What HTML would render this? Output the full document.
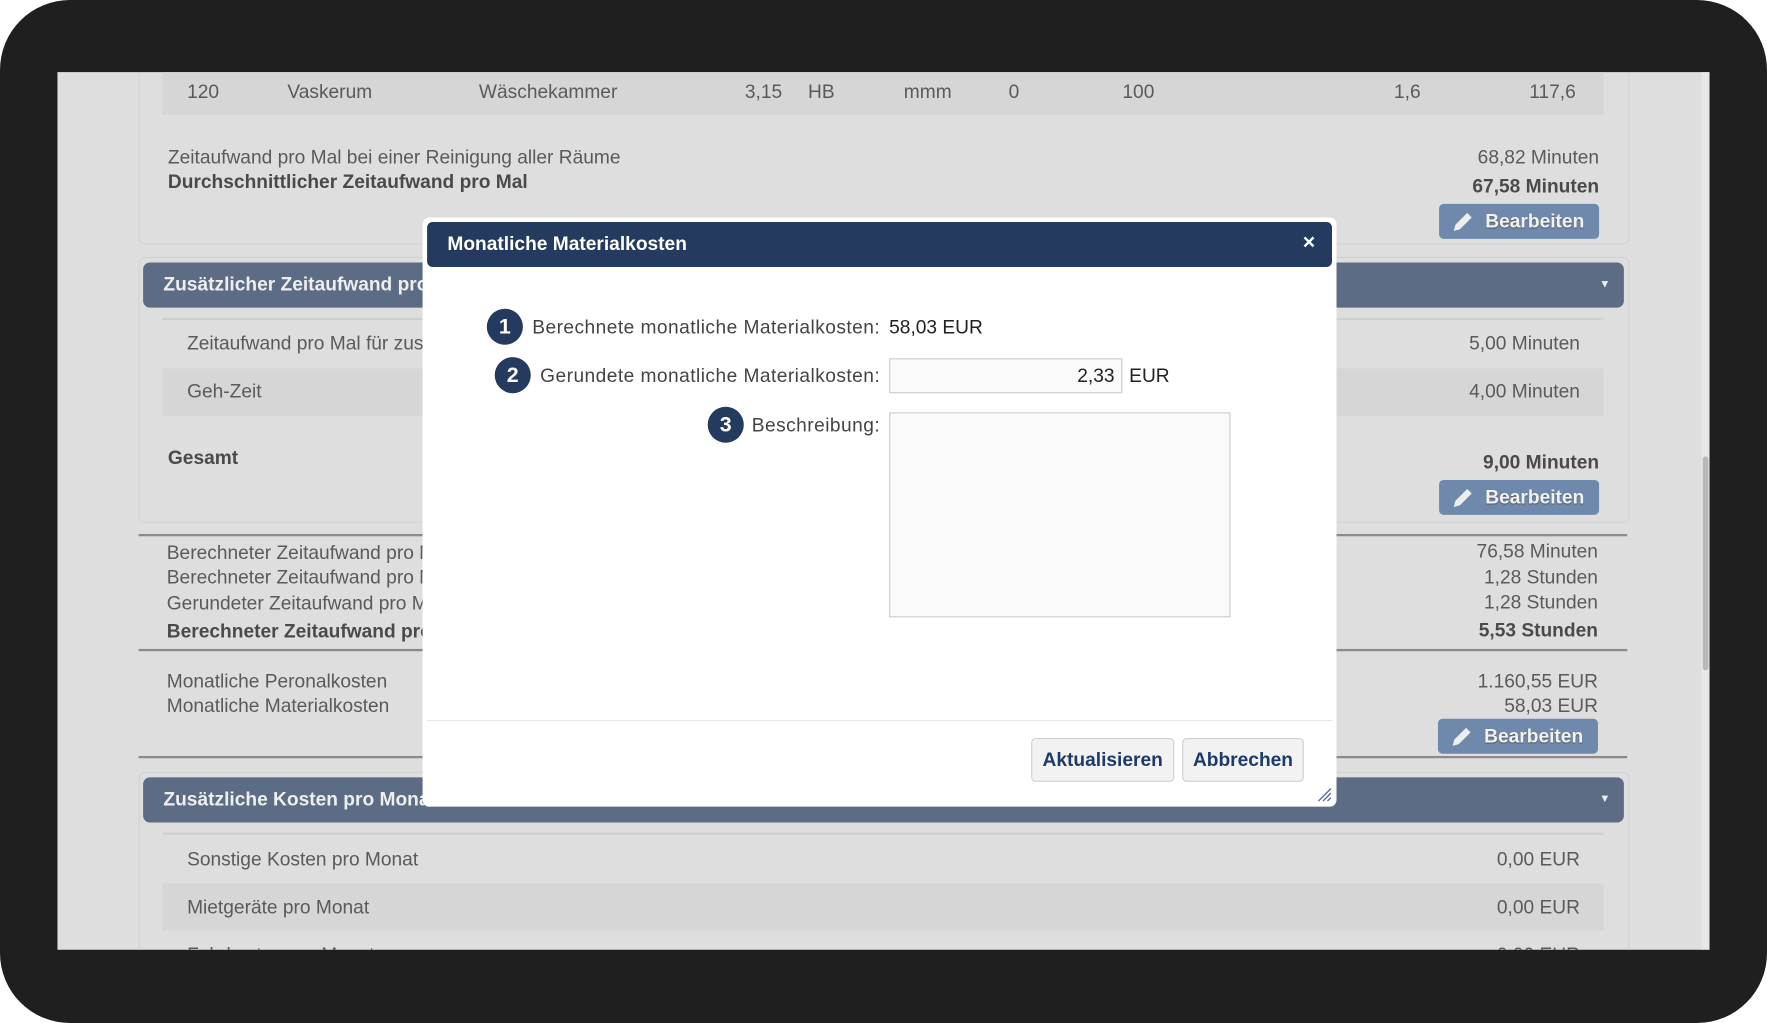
<!DOCTYPE html>
<html><head><meta charset="utf-8"><style>
html,body{margin:0;padding:0;width:1767px;height:1023px;overflow:hidden;background:#fff;font-family:"Liberation Sans",sans-serif}
#w{position:absolute;left:0;top:0;width:1568px;height:908px;transform:scale(1.12691,1.12665);transform-origin:0 0}
.a{position:absolute}
.frame{left:0;top:0;width:1568px;height:908px;background:#201f20;border-radius:62px}
.scr{left:51px;top:64px;width:1466px;height:779px;background:#dedede;overflow:hidden}
.t{position:absolute;font-size:17px;color:#5a5a5a;white-space:nowrap;line-height:20px}
.b{font-weight:bold;color:#4a4a4a}
.r{text-align:right}
.btn{position:absolute;background:#6f89ac;border-radius:4px;color:#f2f2f2;font-weight:bold;font-size:17px;line-height:31px;text-shadow:0 1px 1px #555}
.hdr{position:absolute;background:#5c6c85;border-radius:6px;color:#eee;font-weight:bold;font-size:17px;line-height:40px;padding-left:18px;box-sizing:border-box}
.line{position:absolute;height:2px;background:#8a8a8a}
.c{position:absolute;width:32px;height:32px;border-radius:50%;background:#243a5e;color:#fff;font-weight:bold;font-size:19px;text-align:center;line-height:33px}
.lbl{position:absolute;font-size:17px;color:#444;white-space:nowrap;line-height:20px}
.rl{right:787px;text-align:right;letter-spacing:0.4px}
.mb{position:absolute;background:#f2f2f2;border:1px solid #d0d0d0;border-radius:4px;color:#1c3a6b;font-weight:bold;font-size:17px;text-align:center;box-sizing:border-box;line-height:37px}
</style></head><body><div id="w">
<div class="a frame"></div>
<div class="a scr">
<div class="a" style="left:72px;top:-10px;width:1321px;height:161px;border:1px solid #d2d2d2;border-radius:6px"></div>
<div class="a" style="left:93px;top:0;width:1279px;height:38px;background:#d6d6d6"></div>
<div class="t" style="left:115px;top:8px">120</div>
<div class="t" style="left:204px;top:8px">Vaskerum</div>
<div class="t" style="left:374px;top:8px">Wäschekammer</div>
<div class="t" style="left:610px;top:8px">3,15</div>
<div class="t" style="left:666px;top:8px">HB</div>
<div class="t" style="left:751px;top:8px">mmm</div>
<div class="t" style="left:844px;top:8px">0</div>
<div class="t" style="left:945px;top:8px">100</div>
<div class="t" style="left:1186px;top:8px">1,6</div>
<div class="t" style="left:1306px;top:8px">117,6</div>
<div class="t" style="left:98px;top:66px">Zeitaufwand pro Mal bei einer Reinigung aller Räume</div>
<div class="t b" style="left:98px;top:88px">Durchschnittlicher Zeitaufwand pro Mal</div>
<div class="t r" style="right:98px;top:66px">68,82 Minuten</div>
<div class="t r b" style="right:98px;top:92px">67,58 Minuten</div>
<div class="btn" style="left:1226px;top:117px;width:142px"><span style="padding-left:41px">Bearbeiten</span><svg class="a" style="left:11px;top:6px" width="20" height="20" viewBox="0 0 20 20"><path d="M2 18l1.5-5.5L14 2l4 4L7.5 16.5z" fill="#eee"/></svg></div>

<div class="a" style="left:72px;top:164px;width:1321px;height:234px;border:1px solid #d2d2d2;border-radius:6px"></div>
<div class="hdr" style="left:76px;top:169px;width:1314px;height:40px">Zusätzlicher Zeitaufwand pro Mal<span class="a" style="right:12px;top:0;font-size:10px">▼</span></div>
<div class="a" style="left:93px;top:218px;width:1279px;height:2px;background:#d0d0d0"></div>
<div class="t" style="left:115px;top:231px">Zeitaufwand pro Mal für zusätzliche Arbeiten</div>
<div class="t r" style="right:115px;top:231px">5,00 Minuten</div>
<div class="a" style="left:93px;top:263px;width:1279px;height:42px;background:#d6d6d6"></div>
<div class="t" style="left:115px;top:274px">Geh-Zeit</div>
<div class="t r" style="right:115px;top:274px">4,00 Minuten</div>
<div class="t b" style="left:98px;top:333px">Gesamt</div>
<div class="t r b" style="right:98px;top:337px">9,00 Minuten</div>
<div class="btn" style="left:1226px;top:362px;width:142px"><span style="padding-left:41px">Bearbeiten</span><svg class="a" style="left:11px;top:6px" width="20" height="20" viewBox="0 0 20 20"><path d="M2 18l1.5-5.5L14 2l4 4L7.5 16.5z" fill="#eee"/></svg></div>

<div class="line" style="left:72px;top:410px;width:1321px"></div>
<div class="t" style="left:97px;top:417px">Berechneter Zeitaufwand pro Mal</div>
<div class="t" style="left:97px;top:439px">Berechneter Zeitaufwand pro Mal</div>
<div class="t" style="left:97px;top:462px">Gerundeter Zeitaufwand pro Mal</div>
<div class="t b" style="left:97px;top:487px">Berechneter Zeitaufwand pro Monat</div>
<div class="t r" style="right:99px;top:416px">76,58 Minuten</div>
<div class="t r" style="right:99px;top:439px">1,28 Stunden</div>
<div class="t r" style="right:99px;top:461px">1,28 Stunden</div>
<div class="t r b" style="right:99px;top:486px">5,53 Stunden</div>
<div class="line" style="left:72px;top:512px;width:1321px"></div>
<div class="t" style="left:97px;top:531px">Monatliche Peronalkosten</div>
<div class="t" style="left:97px;top:553px">Monatliche Materialkosten</div>
<div class="t r" style="right:99px;top:531px">1.160,55 EUR</div>
<div class="t r" style="right:99px;top:553px">58,03 EUR</div>
<div class="btn" style="left:1225px;top:574px;width:142px"><span style="padding-left:41px">Bearbeiten</span><svg class="a" style="left:11px;top:6px" width="20" height="20" viewBox="0 0 20 20"><path d="M2 18l1.5-5.5L14 2l4 4L7.5 16.5z" fill="#eee"/></svg></div>
<div class="line" style="left:72px;top:607px;width:1321px"></div>

<div class="a" style="left:72px;top:621px;width:1321px;height:200px;border:1px solid #d2d2d2;border-radius:6px"></div>
<div class="hdr" style="left:76px;top:626px;width:1314px;height:40px">Zusätzliche Kosten pro Monat<span class="a" style="right:12px;top:0;font-size:10px">▼</span></div>
<div class="a" style="left:93px;top:675px;width:1279px;height:2px;background:#d0d0d0"></div>
<div class="t" style="left:115px;top:689px">Sonstige Kosten pro Monat</div>
<div class="t r" style="right:115px;top:689px">0,00 EUR</div>
<div class="a" style="left:93px;top:720px;width:1279px;height:42px;background:#d6d6d6"></div>
<div class="t" style="left:115px;top:732px">Mietgeräte pro Monat</div>
<div class="t r" style="right:115px;top:732px">0,00 EUR</div>
<div class="t" style="left:115px;top:774px">Fahrkosten pro Monat</div>
<div class="t r" style="right:115px;top:774px">0,00 EUR</div>
<div class="a" style="left:1459px;top:0;width:7px;height:779px;background:#e8e8e8"></div>
<div class="a" style="left:1460px;top:341px;width:5px;height:190px;background:#b8b8b8;border-radius:3px"></div>
</div>

<div class="a" style="left:375px;top:193px;width:811px;height:523px;background:#fff;border-radius:6px"></div>
<div class="a" style="left:379px;top:197px;width:803px;height:40px;background:#243a5e;border-radius:5px"></div>
<div class="a" style="left:397px;top:207px;color:#fff;font-weight:bold;font-size:17px">Monatliche Materialkosten</div>
<div class="a" style="left:1156px;top:205px;color:#fff;font-weight:bold;font-size:19px">×</div>
<div class="c" style="left:432px;top:274px">1</div>
<div class="lbl rl" style="top:281px">Berechnete monatliche Materialkosten:</div>
<div class="lbl" style="left:789px;top:281px;color:#222">58,03 EUR</div>
<div class="c" style="left:439px;top:317px">2</div>
<div class="lbl rl" style="top:324px">Gerundete monatliche Materialkosten:</div>
<div class="a" style="left:789px;top:318px;width:207px;height:31px;border:1px solid #ccc;box-sizing:border-box;background:#fafafa"></div>
<div class="lbl" style="left:900px;top:324px;width:89px;text-align:right;color:#222">2,33</div>
<div class="lbl" style="left:1002px;top:324px;color:#222">EUR</div>
<div class="c" style="left:628px;top:361px">3</div>
<div class="lbl rl" style="top:368px">Beschreibung:</div>
<div class="a" style="left:789px;top:366px;width:303px;height:182px;border:1px solid #ccc;box-sizing:border-box;background:#fafafa"></div>
<div class="a" style="left:379px;top:639px;width:803px;height:1px;background:#e6e6e6"></div>
<div class="mb" style="left:915px;top:655px;width:127px;height:39px">Aktualisieren</div>
<div class="mb" style="left:1049px;top:655px;width:108px;height:39px">Abbrechen</div>
<svg class="a" style="left:1168px;top:698px" width="14" height="14" viewBox="0 0 14 14"><path d="M2 13L13 2M6 13L13 6M10 13L13 10" stroke="#4a6a9a" stroke-width="1.2"/></svg>
</div></body></html>
